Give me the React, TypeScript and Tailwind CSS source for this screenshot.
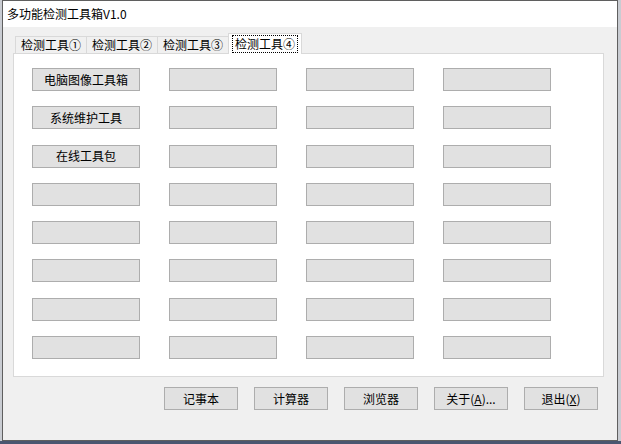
import React from 'react';

const font = { fontFamily: '"Noto Sans CJK SC", "Noto Sans", sans-serif' };

const tabs = ['检测工具①', '检测工具②', '检测工具③', '检测工具④'];

const gridLabels: string[][] = [
  ['电脑图像工具箱', '', '', ''],
  ['系统维护工具', '', '', ''],
  ['在线工具包', '', '', ''],
  ['', '', '', ''],
  ['', '', '', ''],
  ['', '', '', ''],
  ['', '', '', ''],
  ['', '', '', ''],
];

const WinButton: React.FC<{ className?: string; children?: React.ReactNode }> = ({ className = '', children }) => (
  <button
    type="button"
    className={`flex items-center justify-center bg-[#e1e1e1] border border-[#adadad] text-[12px] leading-none text-black ${className}`}
  >
    {children}
  </button>
);

export default function App() {
  return (
    <div className="w-[621px] h-[444px] flex flex-col bg-[#c9ccd2] overflow-hidden" style={font}>
      <div className="h-[441px] pl-[2px] pr-[3px] shrink-0">
        <div className="w-full h-full flex flex-col border border-[#5f5f5f] bg-[#f0f0f0]">
          {/* title bar */}
          <div className="h-[26px] bg-white flex items-center pl-[4px] text-[12px] text-black shrink-0">
            多功能检测工具箱V1.0
          </div>

          <div className="flex-1 flex flex-col pl-[10px]">
            {/* tab strip */}
            <div className="flex items-end h-[26px] pl-[2px] pt-[6px]">
              {tabs.map((t, i) =>
                i === 3 ? (
                  <div
                    key={t}
                    className="w-[74px] h-[21px] -mb-px relative z-10 bg-white border border-[#d9d9d9] border-b-0 flex items-center justify-center"
                  >
                    <span className="text-[12px] leading-none px-[2px] py-[2px] outline-1 outline-dotted outline-black">
                      {t}
                    </span>
                  </div>
                ) : (
                  <div
                    key={t}
                    className="w-[71px] h-[17px] bg-[#f0f0f0] border border-[#d9d9d9] border-b-0 border-r-0 flex items-center justify-center text-[12px] leading-none text-black"
                  >
                    {t}
                  </div>
                )
              )}
            </div>

            {/* tab panel */}
            <div className="w-[591px] h-[324px] bg-white border border-[#d9d9d9] pl-[18px] pt-[14px]">
              <div className="grid grid-cols-[108px_108px_108px_108px] gap-x-[29px] gap-y-[15.3px]">
                {gridLabels.flat().map((label, i) => (
                  <WinButton key={i} className="h-[23px]">
                    {label}
                  </WinButton>
                ))}
              </div>
            </div>

            {/* bottom buttons */}
            <div className="flex gap-x-[16px] pl-[151px] pt-[10px]">
              <WinButton className="w-[74px] h-[23px]">记事本</WinButton>
              <WinButton className="w-[74px] h-[23px]">计算器</WinButton>
              <WinButton className="w-[74px] h-[23px]">浏览器</WinButton>
              <WinButton className="w-[74px] h-[23px]">
                关于(<span className="underline">A</span>)...
              </WinButton>
              <WinButton className="w-[74px] h-[23px]">
                退出(<span className="underline">X</span>)
              </WinButton>
            </div>
          </div>
        </div>
      </div>
      {/* desktop visible below the window */}
      <div className="flex-1 bg-[#4a5670]" />
    </div>
  );
}
